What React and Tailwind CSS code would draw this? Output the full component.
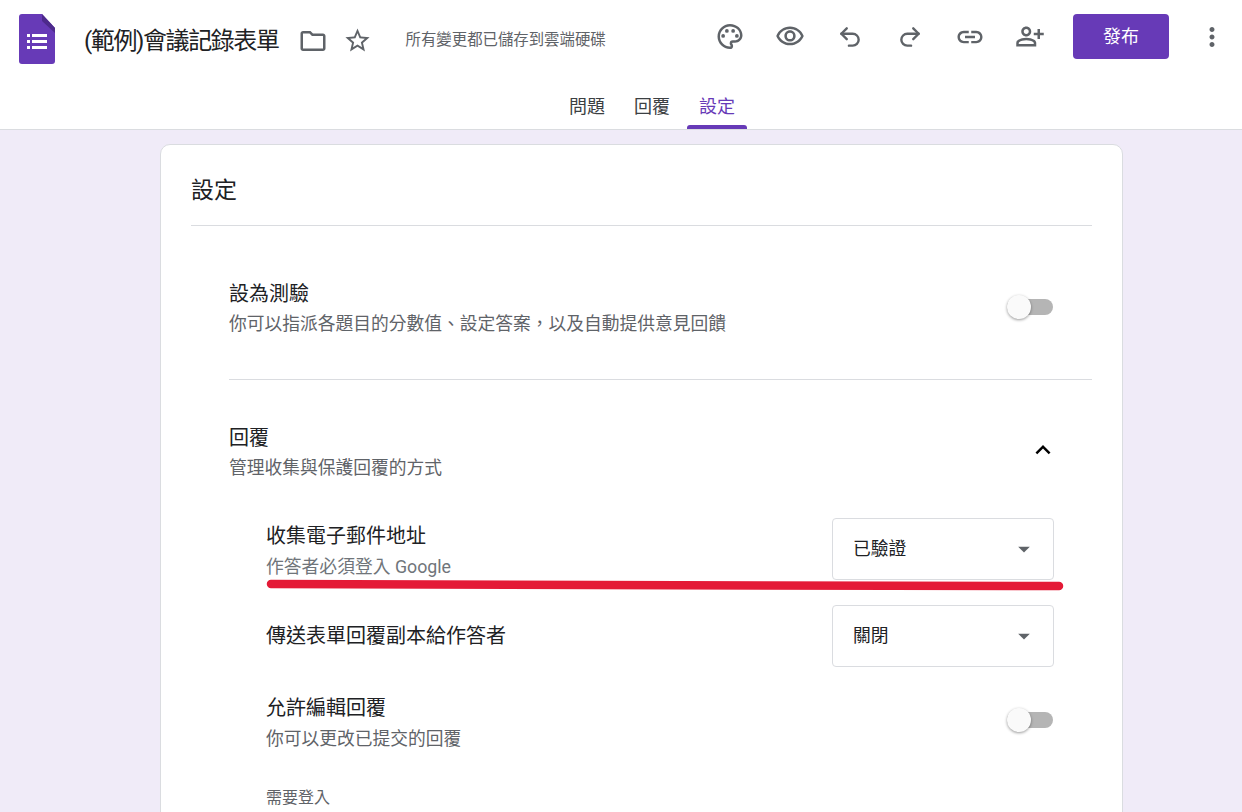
import {
  MdOutlineFolder,
  MdStarBorder,
  MdOutlinePalette,
  MdOutlineVisibility,
  MdLink,
  MdOutlinePersonAddAlt,
  MdMoreVert,
  MdArrowDropDown,
  MdExpandLess,
} from "react-icons/md";
import { Undo2, Redo2 } from "lucide-react";

const FormsLogo = () => (
  <svg width="36" height="50" viewBox="0 0 36 50" className="shrink-0">
    <path d="M3 0H23L36 14V47a3 3 0 0 1-3 3H3a3 3 0 0 1-3-3V3a3 3 0 0 1 3-3z" fill="#673ab7" />
    <path d="M23 0L36 14V19L23 7z" fill="#4d2a8c" />
    <g fill="#fff">
      <rect x="8" y="20" width="3" height="3" />
      <rect x="8" y="26" width="3" height="3" />
      <rect x="8" y="32" width="3" height="3" />
      <rect x="13" y="20" width="15" height="3" />
      <rect x="13" y="26" width="15" height="3" />
      <rect x="13" y="32" width="15" height="3" />
    </g>
  </svg>
);

const Toggle = ({ className = "" }) => (
  <div className={`relative w-[46px] h-[16px] rounded-full bg-[#b5b5b5] ml-auto ${className}`}>
    <div className="absolute left-0 top-[-4px] w-6 h-6 rounded-full bg-[#fafafa] shadow-[0_1px_3px_rgba(0,0,0,0.4)]" />
  </div>
);

const Select = ({ value }) => (
  <div className="w-[222px] h-[62px] mr-[-1px] flex items-center justify-between pl-[20px] pr-[15px] border border-[#dadce0] rounded-[4px] text-[17.75px] text-[#202124] bg-white">
    <span>{value}</span>
    <MdArrowDropDown size={28} className="text-[#5f6368]" />
  </div>
);

const App = () => {
  return (
    <div
      className="relative h-screen overflow-hidden bg-[#f0ebf8] text-[#202124]"
      style={{ fontFamily: 'Roboto, "Noto Sans CJK TC", sans-serif' }}
    >
      <header className="bg-white border-b border-[#dadce0] h-[130px] flex flex-col">
        <div className="flex items-center h-[78px] pl-[19px]">
          <FormsLogo />
          <h1 className="ml-[29px] mt-[3px] text-[24px] leading-none tracking-[-1.4px] text-[#202124]">(範例)會議記錄表單</h1>
          <MdOutlineFolder size={30} className="ml-[19px] mt-[3px] text-[#5f6368]" />
          <MdStarBorder size={29} className="ml-[15px] mt-[3px] text-[#5f6368]" />
          <span className="ml-[34px] mt-[3px] text-[15.4px] text-[#5f6368]">所有變更都已儲存到雲端硬碟</span>
          <div className="flex items-center ml-auto mb-[5px]">
            <div className="flex items-center gap-[30px] mr-[28px] text-[#5f6368]">
              <div className="w-[30px] h-[30px] flex items-center justify-center">
                <MdOutlinePalette size={31} />
              </div>
              <div className="w-[30px] h-[30px] flex items-center justify-center">
                <MdOutlineVisibility size={31} />
              </div>
              <div className="w-[30px] h-[30px] flex items-center justify-center">
                <Undo2 size={26} strokeWidth={2.2} />
              </div>
              <div className="w-[30px] h-[30px] flex items-center justify-center">
                <Redo2 size={26} strokeWidth={2.2} />
              </div>
              <div className="w-[30px] h-[30px] flex items-center justify-center">
                <MdLink size={30} />
              </div>
              <div className="w-[30px] h-[30px] flex items-center justify-center">
                <MdOutlinePersonAddAlt size={31} />
              </div>
            </div>
            <button className="w-[96px] h-[45px] rounded-[4px] bg-[#673ab7] text-white text-[18px]">發布</button>
            <MdMoreVert size={30} className="ml-[28px] mr-[15px] text-[#5f6368]" />
          </div>
        </div>
        <nav className="flex-1 flex justify-center items-stretch gap-[29px] text-[18px] text-[#3c4043] pl-[62px]">
          <span className="pt-[15px]">問題</span>
          <span className="pt-[15px]">回覆</span>
          <span className="relative pt-[15px] text-[#673ab7]">
            設定
            <span className="absolute left-[-12px] right-[-12px] bottom-0 h-[4px] rounded-t-[3px] bg-[#673ab7]" />
          </span>
        </nav>
      </header>

      <main className="ml-[160px] mt-[14px] w-[963px] h-[800px] rounded-[10px] border border-[#dadce0] bg-white px-[30px]">
        <h2 className="h-[81px] flex items-center pt-[12px] text-[23px] border-b border-[#dadce0]">設定</h2>

        <section className="ml-[38px] h-[154px] flex items-center pr-[39px] pt-[10px] border-b border-[#dadce0]">
          <div className="mt-[2px]">
            <h3 className="text-[20px] leading-[30px]">設為測驗</h3>
            <p className="text-[17.75px] leading-[30px] text-[#5f6368]">{"你可以指派各題目的分數值、設定答案\uFF0C以及自動提供意見回饋"}</p>
          </div>
          <Toggle className="mb-[2px]" />
        </section>

        <section className="ml-[38px] pr-[39px] pt-[43px]">
          <div className="flex items-center">
            <div>
              <h3 className="text-[20px] leading-[30px]">回覆</h3>
              <p className="text-[17.75px] leading-[30px] text-[#5f6368]">管理收集與保護回覆的方式</p>
            </div>
            <MdExpandLess size={30} className="ml-auto mr-[-5px] mb-[6px] text-black" />
          </div>

          <div className="ml-[37px] mt-[35px]">
            <div className="flex items-center justify-between h-[62px]">
              <div className="pt-[3px]">
                <h4 className="text-[20px] leading-[32px]">收集電子郵件地址</h4>
                <p className="text-[17.8px] leading-[30px] text-[#70757a]">作答者必須登入 Google</p>
              </div>
              <Select value="已驗證" />
            </div>
            <div className="flex items-center justify-between h-[62px] mt-[25px]">
              <h4 className="text-[20px]">傳送表單回覆副本給作答者</h4>
              <Select value="關閉" />
            </div>
            <div className="flex items-center justify-between h-[62px] mt-[22px]">
              <div className="pt-[5px]">
                <h4 className="text-[20px] leading-[32px]">允許編輯回覆</h4>
                <p className="text-[17.75px] leading-[30px] text-[#5f6368]">你可以更改已提交的回覆</p>
              </div>
              <Toggle />
            </div>
            <p className="mt-[35px] text-[16px] text-[#5f6368]">需要登入</p>
          </div>
        </section>
      </main>

      {/* 紅色手繪底線 */}
      <svg className="absolute left-0 top-0 pointer-events-none" width="1242" height="812">
        <path d="M271 584C500 583 800 587 1059 586" stroke="#e41a36" strokeWidth="8.5" strokeLinecap="round" fill="none" />
      </svg>
    </div>
  );
};

export default App;
